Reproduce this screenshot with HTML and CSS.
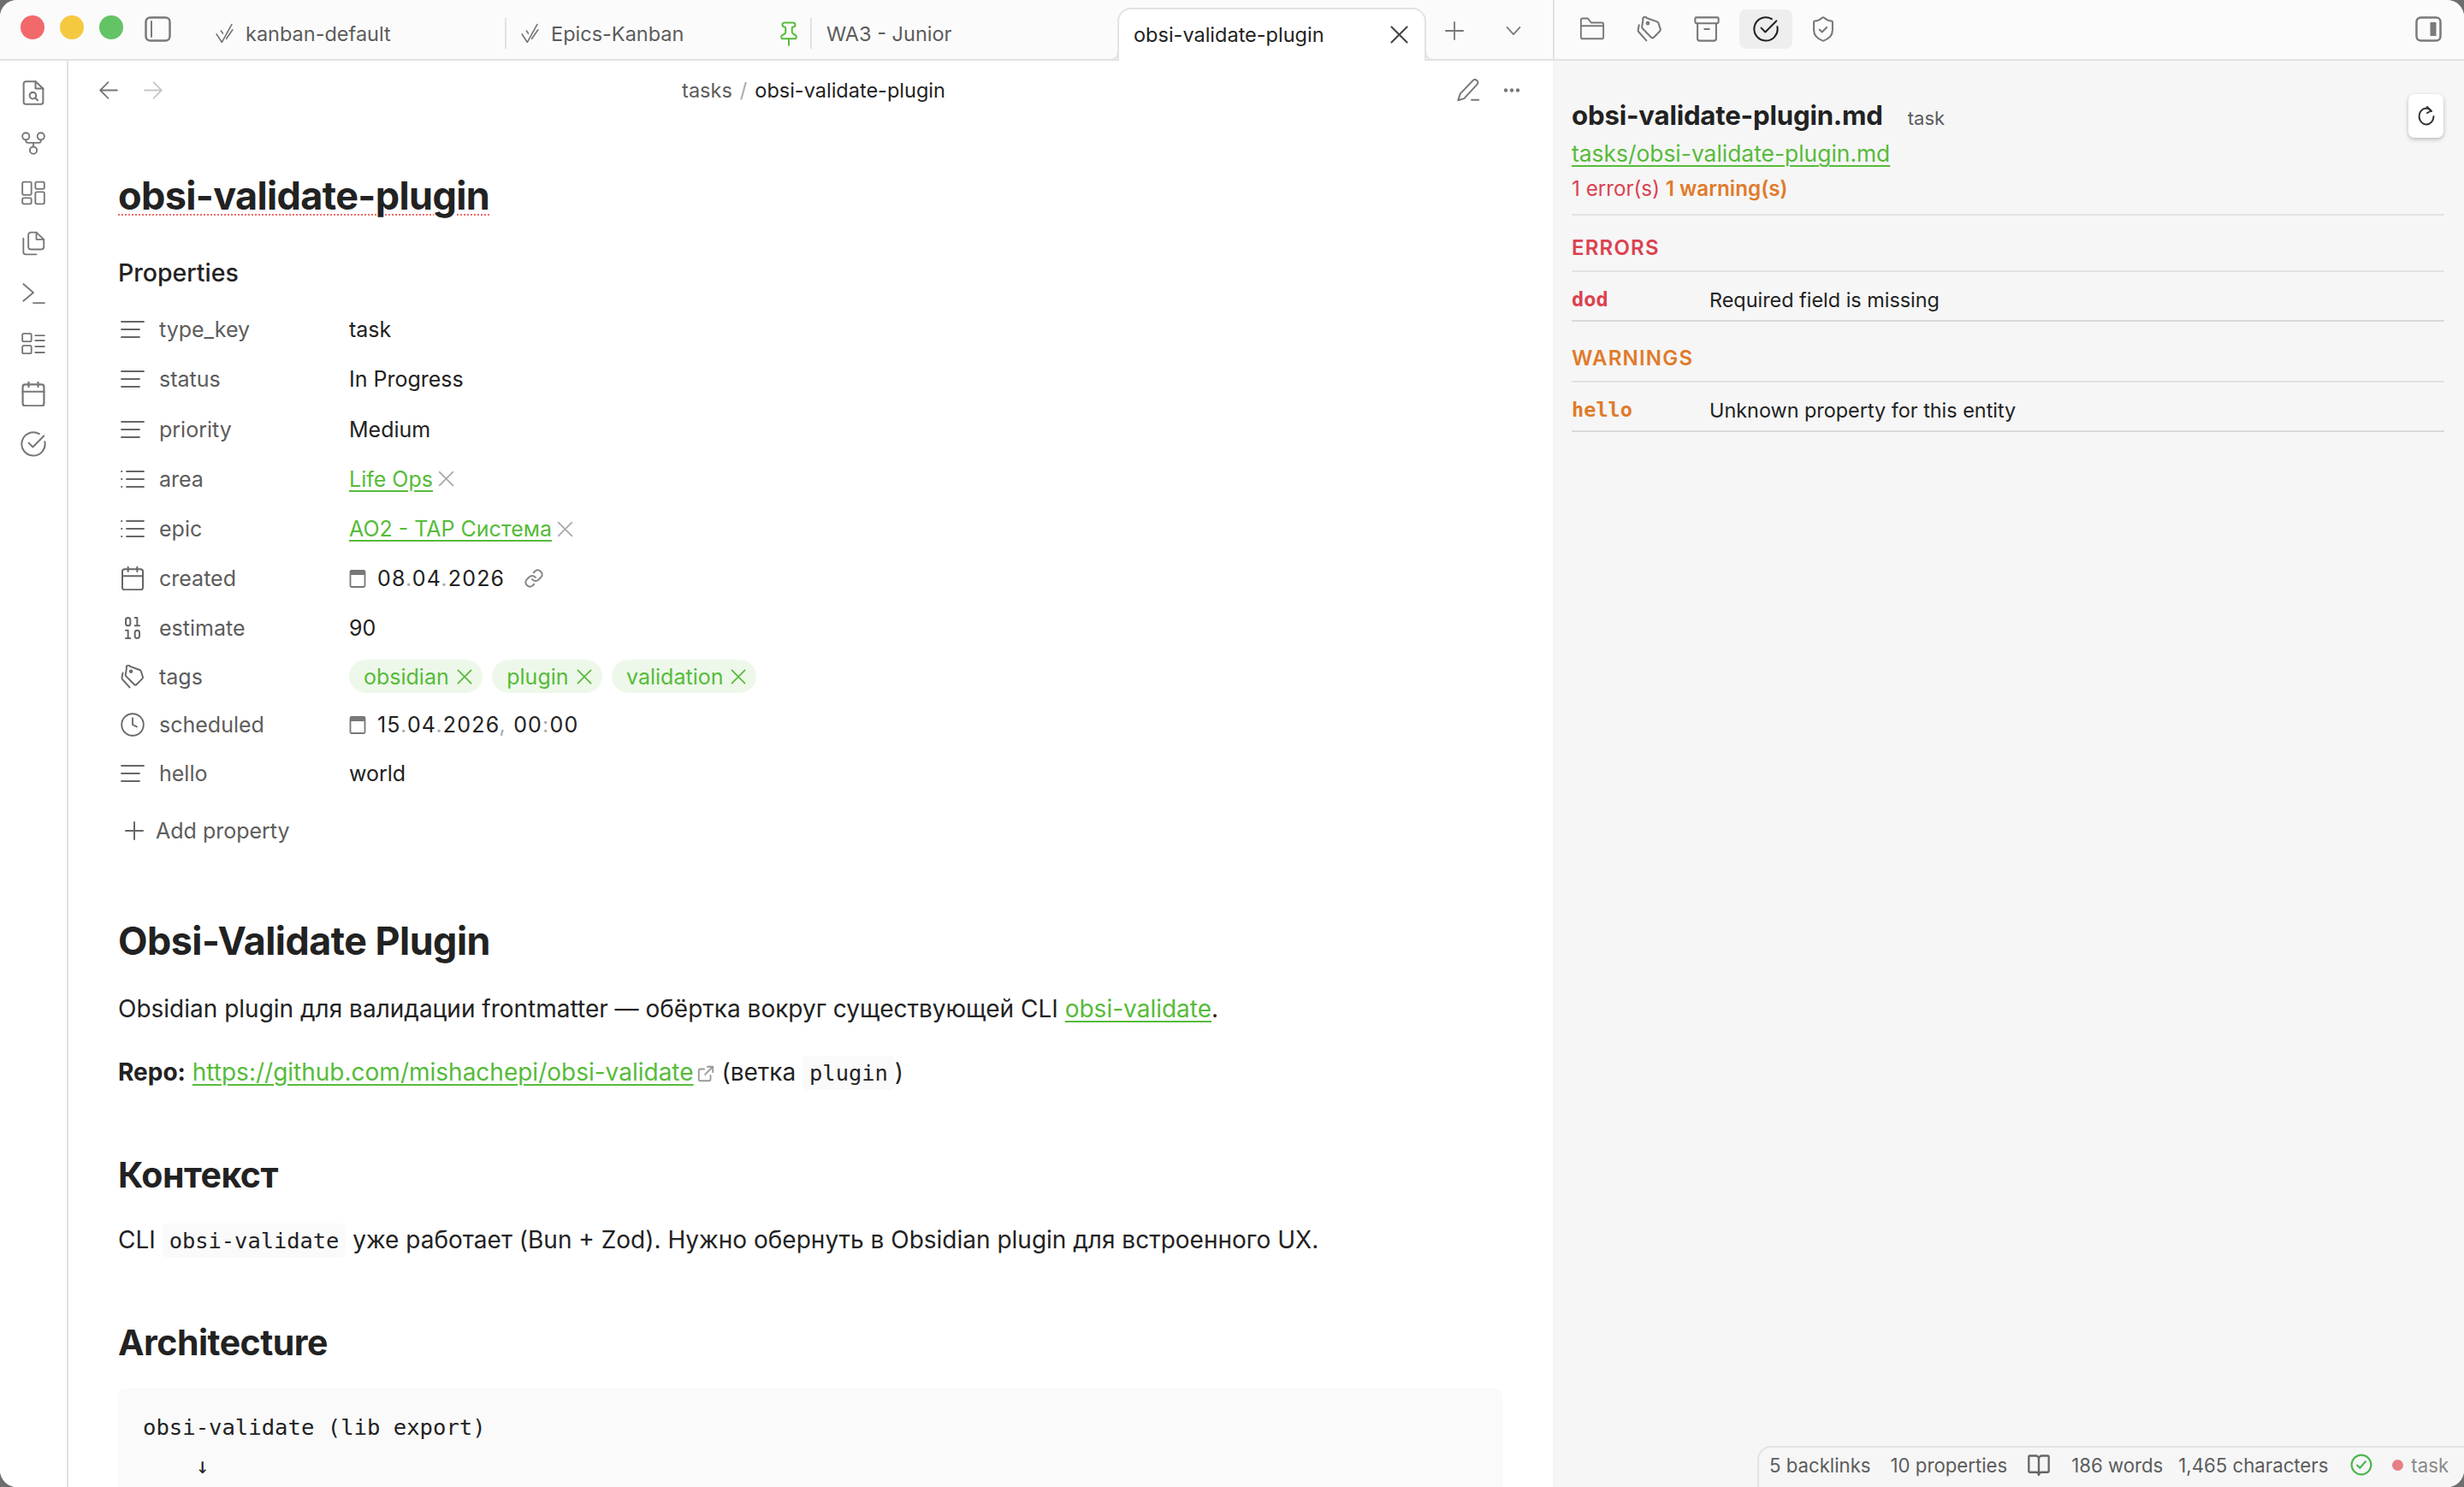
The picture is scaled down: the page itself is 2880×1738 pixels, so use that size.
FILE: index.html
```html
<!DOCTYPE html>
<html lang="ru">
<head>
    <meta charset="UTF-8">
    <title>obsi-validate-plugin</title>
    <link rel="stylesheet" href="styles.css">
</head>
<body>

<svg class="sprite" xmlns="http://www.w3.org/2000/svg">
    <symbol id="i-text" viewBox="0 0 28 24"><path d="M1 3h26M1 12h21M1 21h21"/></symbol>
    <symbol id="i-list" viewBox="0 0 28 24"><path d="M7 3h20M7 12h20M7 21h20M1 3h.5M1 12h.5M1 21h.5"/></symbol>
    <symbol id="i-x" viewBox="0 0 24 24"><path d="M5 5l14 14M19 5L5 19"/></symbol>
    <symbol id="i-calendar" viewBox="2.5 1.5 19 21"><path d="M8 2v4M16 2v4M3 10h18"/><rect x="3" y="4" width="18" height="18" rx="2"/></symbol>
    <symbol id="i-circle-check" viewBox="1 1 22 22"><path d="M21.8 10A10 10 0 1 1 17 3.3"/><path d="M8 11l3.5 3.5L21 5"/></symbol>
    <symbol id="i-tags" viewBox="1 1 22 22"><path d="M9.5 2.5l9 3.2a2 2 0 0 1 1.2 1.2l1.6 5a2 2 0 0 1-.5 2l-5.2 5.2a1.5 1.5 0 0 1-2.1 0L6 11.5a2 2 0 0 1-.5-1.4l1-6.2a1.6 1.6 0 0 1 3-1.4z"/><path d="M3 8.5l-.8 4.2a2 2 0 0 0 .5 1.7l6.6 7.4"/><circle cx="10.5" cy="7" r="1"/></symbol>
    <symbol id="i-check2" viewBox="0 0 24 24"><path d="M3 13l6 9L20 2"/><path d="M8 9l2 3"/><path d="M14 18l7-10"/></symbol>
    <symbol id="i-date" viewBox="0 0 20 22"><path class="fill" d="M1 2h18v5H1z"/><rect x="1.500" y="2" width="17" height="19" rx="1.500"/></symbol>
</svg>

<div class="window">

    <!-- Top bar -->
    <div class="topbar">
        <div class="topbar-left">
            <span class="light red"></span>
            <span class="light yellow"></span>
            <span class="light green"></span>
            <svg class="toggle-left" viewBox="0 0 31 30"><rect x="1.5" y="1.5" width="28" height="27" rx="5"/><path class="thin" d="M8 6v18"/></svg>

            <div class="tab tab-first">
                <svg class="tab-icon"><use href="#i-check2"/></svg>
                <span>kanban-default</span>
            </div>
            <div class="tab">
                <svg class="tab-icon"><use href="#i-check2"/></svg>
                <span>Epics-Kanban</span>
                <svg class="tab-pin" viewBox="0 0 24 24"><path d="M12 17v6"/><path d="M9 10.8a2 2 0 0 1-1.1 1.8l-1.8.9A2 2 0 0 0 5 15.2v.8a1 1 0 0 0 1 1h12a1 1 0 0 0 1-1v-.8a2 2 0 0 0-1.1-1.8l-1.8-.9a2 2 0 0 1-1.1-1.8V7a1 1 0 0 1 1-1 2 2 0 0 0 0-4H8a2 2 0 0 0 0 4 1 1 0 0 1 1 1z"/></svg>
            </div>
            <div class="tab tab-plain">
                <span>WA3 - Junior</span>
            </div>
            <div class="tab-active">
                <span>obsi-validate-plugin</span>
                <svg class="tab-close"><use href="#i-x"/></svg>
            </div>
            <svg class="tab-plus" viewBox="0 0 24 24"><path d="M12 1v22M1 12h22"/></svg>
            <svg class="tab-more" viewBox="0 0 24 24"><path d="M3 7l9 10 9-10"/></svg>
        </div>

        <div class="topbar-right">
            <svg class="side-icon" viewBox="0 0 24 24"><path d="M3 21a1.5 1.5 0 0 1-1.5-1.5v-16A1.5 1.5 0 0 1 3 2h5l3 4h10a1.5 1.5 0 0 1 1.5 1.5v12A1.5 1.5 0 0 1 21 21z"/><path d="M1.5 9h21"/></svg>
            <svg class="side-icon"><use href="#i-tags"/></svg>
            <svg class="side-icon" viewBox="1 1 22 22"><rect x="2" y="2" width="20" height="5" rx="1"/><path d="M4 7v13a2 2 0 0 0 2 2h12a2 2 0 0 0 2-2V7M10 12h4"/></svg>
            <span class="side-icon-on"><svg class="side-icon dark"><use href="#i-circle-check"/></svg></span>
            <svg class="side-icon" viewBox="3 1 18 22"><path d="M20 13c0 5-3.5 7.5-7.7 9a1 1 0 0 1-.6 0C7.5 20.500 4 18 4 13V6a1 1 0 0 1 1-1c2 0 4.500-1.200 6.200-2.700a1.200 1.200 0 0 1 1.600 0C14.500 3.800 17 5 19 5a1 1 0 0 1 1 1z"/><path d="M9 12.500l2 2 4-4"/></svg>
            <svg class="toggle-right" viewBox="0 0 31 30"><rect x="1.500" y="1.500" width="28" height="27" rx="5"/><path class="thick" d="M21 7v16"/></svg>
        </div>
    </div>

    <div class="workspace">

        <!-- Ribbon -->
        <div class="ribbon">
            <svg class="rib-icon" viewBox="1.500 .5 21 23"><path d="M14 1.500H5a2 2 0 0 0-2 2v17a2 2 0 0 0 2 2h14a2 2 0 0 0 2-2V8z"/><path d="M14 1.500V8h7"/><circle cx="11.500" cy="14.500" r="3"/><path d="M14 17l2 2"/></svg>
            <svg class="rib-icon" viewBox="0 0 24 24"><circle cx="4.500" cy="5" r="3.500"/><circle cx="19.500" cy="5" r="3.500"/><circle cx="12" cy="19" r="3.500"/><path d="M4.500 8.500v1a2 2 0 0 0 2 2h11a2 2 0 0 0 2-2v-1M12 11.500v4"/></svg>
            <svg class="rib-icon" viewBox="0 0 24 24"><rect x="1" y="1" width="9" height="13" rx="1.500"/><rect x="14" y="1" width="9" height="7" rx="1.500"/><rect x="14" y="11" width="9" height="12" rx="1.500"/><rect x="1" y="17" width="9" height="6" rx="1.500"/></svg>
            <svg class="rib-icon" viewBox="0 0 24 24"><path d="M15 1H9.500A2.500 2.500 0 0 0 7 3.500v12A2.500 2.500 0 0 0 9.500 18H20a2.500 2.500 0 0 0 2.500-2.500V8z"/><path d="M15 1v7h7.500"/><path d="M2 7v13.500A2.500 2.500 0 0 0 4.500 23H15"/></svg>
            <svg class="rib-icon" viewBox="0 0 24 24"><path d="M2 3l10 8.500L2 20M12 22h11"/></svg>
            <svg class="rib-icon" viewBox="0 0 24 24"><rect x="1" y="2" width="9" height="8" rx="1.500"/><rect x="1" y="14" width="9" height="8" rx="1.500"/><path d="M14 4h9M14 9h9M14 15h9M14 21h9"/></svg>
            <svg class="rib-icon"><use href="#i-calendar"/></svg>
            <svg class="rib-icon big"><use href="#i-circle-check"/></svg>
        </div>

        <!-- Note -->
        <div class="main">
            <div class="nav">
                <div class="nav-arrows">
                    <svg class="nav-icon" viewBox="0 0 24 24"><path d="M22 12H3M12 3l-9 9 9 9"/></svg>
                    <svg class="nav-icon off" viewBox="0 0 24 24"><path d="M2 12h19M12 3l9 9-9 9"/></svg>
                </div>
                <div class="crumbs"><span class="crumb-dir">tasks</span><span class="crumb-sep">/</span><span>obsi-validate-plugin</span></div>
                <div class="nav-actions">
                    <svg class="nav-icon" viewBox="0 0 24 24"><path d="M20.500 2.500a2.400 2.400 0 0 0-3.500 0L4 16l-2 6.500 6-1.800L21 6.500a2.500 2.500 0 0 0-.5-4z"/><path d="M15.500 22h7"/></svg>
                    <svg class="nav-dots" viewBox="0 0 24 8"><circle cx="4" cy="4" r="2.500"/><circle cx="12" cy="4" r="2.500"/><circle cx="20" cy="4" r="2.500"/></svg>
                </div>
            </div>

            <div class="content">
                <div class="inline-title">obsi-validate-plugin</div>
                <div class="props-heading">Properties</div>

                <div class="prop">
                    <svg class="prop-icon"><use href="#i-text"/></svg>
                    <span class="prop-key">type_key</span>
                    <span class="prop-val">task</span>
                </div>
                <div class="prop">
                    <svg class="prop-icon"><use href="#i-text"/></svg>
                    <span class="prop-key">status</span>
                    <span class="prop-val">In Progress</span>
                </div>
                <div class="prop">
                    <svg class="prop-icon"><use href="#i-text"/></svg>
                    <span class="prop-key">priority</span>
                    <span class="prop-val">Medium</span>
                </div>
                <div class="prop">
                    <svg class="prop-icon"><use href="#i-list"/></svg>
                    <span class="prop-key">area</span>
                    <span class="prop-val"><a class="link">Life Ops</a><svg class="link-x"><use href="#i-x"/></svg></span>
                </div>
                <div class="prop">
                    <svg class="prop-icon"><use href="#i-list"/></svg>
                    <span class="prop-key">epic</span>
                    <span class="prop-val"><a class="link">AO2 - TAP Система</a><svg class="link-x"><use href="#i-x"/></svg></span>
                </div>
                <div class="prop">
                    <svg class="prop-icon thin-icon"><use href="#i-calendar"/></svg>
                    <span class="prop-key">created</span>
                    <span class="prop-val date">
                        <svg class="date-icon"><use href="#i-date"/></svg>
                        <span>08<i>.</i>04<i>.</i>2026</span>
                        <svg class="date-link" viewBox="0 0 24 24"><path d="M10 13a5 5 0 0 0 7.500.5l3-3a5 5 0 0 0-7-7l-1.700 1.700"/><path d="M14 11a5 5 0 0 0-7.500-.5l-3 3a5 5 0 0 0 7 7l1.700-1.700"/></svg>
                    </span>
                </div>
                <div class="prop prop-short">
                    <svg class="prop-icon thin-icon" viewBox="3 1.500 18 21"><rect x="14" y="14" width="4" height="7" rx="2"/><rect x="6" y="3" width="4" height="7" rx="2"/><path d="M6 21h4M14 10h4M6 14h2v7M14 3h2v7"/></svg>
                    <span class="prop-key">estimate</span>
                    <span class="prop-val">90</span>
                </div>
                <div class="prop prop-short">
                    <svg class="prop-icon thin-icon"><use href="#i-tags"/></svg>
                    <span class="prop-key">tags</span>
                    <span class="prop-val pills">
                        <span class="pill">obsidian<svg class="pill-x"><use href="#i-x"/></svg></span>
                        <span class="pill">plugin<svg class="pill-x"><use href="#i-x"/></svg></span>
                        <span class="pill">validation<svg class="pill-x"><use href="#i-x"/></svg></span>
                    </span>
                </div>
                <div class="prop prop-short">
                    <svg class="prop-icon thin-icon" viewBox="0.500 0.500 23 23"><circle cx="12" cy="12" r="10.500"/><path d="M12 5.500V12l4 2"/></svg>
                    <span class="prop-key">scheduled</span>
                    <span class="prop-val date">
                        <svg class="date-icon"><use href="#i-date"/></svg>
                        <span>15<i>.</i>04<i>.</i>2026<i>,</i> 00<i>:</i>00</span>
                    </span>
                </div>
                <div class="prop prop-short">
                    <svg class="prop-icon"><use href="#i-text"/></svg>
                    <span class="prop-key">hello</span>
                    <span class="prop-val">world</span>
                </div>

                <div class="add-prop">
                    <svg class="add-icon" viewBox="0 0 24 24"><path d="M12 2v20M2 12h20"/></svg>
                    <span>Add property</span>
                </div>

                <h2 class="h-first">Obsi-Validate Plugin</h2>
                <p>Obsidian plugin для валидации frontmatter — обёртка вокруг существующей CLI <a class="link">obsi-validate</a>.</p>
                <p class="repo"><strong>Repo:</strong> <a class="link">https://github.com/mishachepi/obsi-validate</a><svg class="ext" viewBox="0 0 24 24"><path d="M14 3h7v7M21 3l-10 10M18 14v5a2 2 0 0 1-2 2H5a2 2 0 0 1-2-2V8a2 2 0 0 1 2-2h5"/></svg> (ветка <code>plugin</code>)</p>

                <h2 class="h-ctx">Контекст</h2>
                <p>CLI <code>obsi-validate</code> уже работает (Bun + Zod). Нужно обернуть в Obsidian plugin для встроенного UX.</p>

                <h2 class="h-arch">Architecture</h2>
                <pre class="code">obsi-validate (lib export)
    ↓</pre>
            </div>
        </div>

        <!-- Validation panel -->
        <div class="side">
            <button class="refresh"><svg class="refresh-icon" viewBox="0 0 24 24"><path d="M20.500 12a8.500 9.500 0 1 1-9-9.500c1.500 0 3 .5 4 1.200L18 6"/><path d="M13 1l4.500 4.500L13 8"/></svg></button>
            <div class="side-head">
                <span class="side-file">obsi-validate-plugin.md</span>
                <span class="side-type">task</span>
            </div>
            <a class="link side-path">tasks/obsi-validate-plugin.md</a>
            <div class="side-counts"><span class="err">1 error(s)</span> <strong class="warn">1 warning(s)</strong></div>

            <div class="group-title err">ERRORS</div>
            <div class="issue"><span class="issue-key err">dod</span><span>Required field is missing</span></div>

            <div class="group-title warn warn-title">WARNINGS</div>
            <div class="issue"><span class="issue-key warn">hello</span><span>Unknown property for this entity</span></div>

            <div class="status">
                <span class="st-a">5 backlinks</span>
                <span class="st-b">10 properties</span>
                <svg class="st-book" viewBox="0 0 24 24"><path d="M12 6v16"/><path d="M12 6a3 3 0 0 0-3-3H3a1 1 0 0 0-1 1v14.500a1 1 0 0 0 1 1h6.500a2.500 2.500 0 0 1 2.500 2.500 2.500 2.500 0 0 1 2.500-2.500H21a1 1 0 0 0 1-1V4a1 1 0 0 0-1-1h-6a3 3 0 0 0-3 3z"/></svg>
                <span class="st-c">186 words</span>
                <span class="st-d">1,465 characters</span>
                <svg class="st-ok" viewBox="0 0 24 24"><circle cx="12" cy="12" r="10.500"/><path d="M7.500 12.500l3 3 6-7"/></svg>
                <span class="st-dot"></span>
                <span class="st-task">task</span>
            </div>
        </div>
    </div>
</div>

</body>
</html>
```

FILE: styles.css
```css
* { box-sizing: border-box; }
html, body { margin: 0; height: 100%; }
body { background: #6e6e6e; font-family: Inter, "Noto Sans", sans-serif; color: #222; overflow: hidden; }
svg { fill: none; stroke: currentColor; stroke-width: 2; stroke-linecap: round; stroke-linejoin: round; flex: none; }
.sprite { display: none; }
.link { color: #56bb3a; text-decoration: underline; text-underline-offset: 4px; text-decoration-thickness: 2px; }

.window { height: 1738px; background: #fff; border-radius: 20px; overflow: hidden; display: flex; flex-direction: column; }

/* top bar */
.topbar { height: 71px; display: flex; background: #fbfbfb; border-bottom: 2px solid #e2e2e2; flex: none; }
.topbar-left { width: 1815px; display: flex; align-items: flex-start; padding-left: 24px; position: relative; }
.light { width: 28px; height: 28px; border-radius: 50%; margin: 18px 18px 0 0; flex: none; }
.red { background: #f2696b; }
.yellow { background: #f5c93f; }
.green { background: #62c465; }
.toggle-left { width: 31px; height: 30px; margin: 19px 0 0 7px; color: #7a7a7a; stroke-width: 2.5; }
.toggle-left .thin { stroke-width: 2; }
.tab { width: 357px; height: 36px; margin-top: 21px; display: flex; align-items: center; padding-left: 15px; border-right: 2px solid #e2e2e2; font-size: 23.5px; color: #5c5c5c; }
.tab-first { margin-left: 35px; }
.tab-plain { border-right: none; padding-left: 17px; }
.tab-icon { width: 25px; height: 30px; margin-right: 12px; color: #777; stroke-width: 1.6; }
.tab-pin { width: 30px; height: 30px; margin-left: auto; margin-right: 10px; color: #56bb3a; stroke-width: 1.6; }
.tab-active { width: 361px; height: 62px; margin-top: 9px; position: relative; z-index: 1; display: flex; align-items: center; padding: 0 0 2px 17px; background: #fff; border: 2px solid #e2e2e2; border-bottom: none; border-radius: 16px 16px 0 0; font-size: 23.5px; color: #222; }
.tab-active::before, .tab-active::after { content: ""; position: absolute; bottom: 0; width: 10px; height: 10px; border-bottom: 2px solid #e2e2e2; }
.tab-active::before { left: -12px; border-right: 2px solid #e2e2e2; border-bottom-right-radius: 10px; }
.tab-active::after { right: -12px; border-left: 2px solid #e2e2e2; border-bottom-left-radius: 10px; }
.tab-close { width: 31px; height: 31px; margin-left: auto; margin-right: 14px; color: #444; stroke-width: 1.600; }
.tab-plus { width: 22px; height: 22px; margin: 25px 0 0 22px; color: #777; stroke-width: 2; }
.tab-more { width: 20px; height: 20px; margin: 26px 0 0 48px; color: #777; }
.topbar-right { flex: 1; border-left: 2px solid #e2e2e2; display: flex; align-items: flex-start; padding-left: 29px; }
.side-icon { width: 30px; height: 30px; margin: 19px 37px 0 0; color: #777; stroke-width: 1.5; }
.side-icon-on { width: 62px; height: 46px; margin: 11px 21px 0 -14px; display: flex; align-items: center; justify-content: center; background: #eee; border-radius: 8px; }
.side-icon.dark { margin: 0; color: #222; }
.toggle-right { width: 31px; height: 30px; margin: 19px 26px 0 auto; color: #7a7a7a; stroke-width: 2.5; }
.toggle-right .thick { stroke-width: 7; stroke-linecap: butt; }

.workspace { flex: 1; display: flex; min-height: 0; }

/* ribbon */
.ribbon { width: 80px; flex: none; border-right: 2px solid #e2e2e2; display: flex; flex-direction: column; align-items: center; padding-top: 23px; gap: 29.600px; background: #fff; }
.rib-icon { width: 28px; height: 29px; color: #777; stroke-width: 1.6; }
.rib-icon.big { width: 30px; height: 30px; stroke-width: 1.5; }

/* note */
.main { width: 1735px; flex: none; overflow: hidden; }
.nav { height: 68px; display: grid; grid-template-columns: 1fr auto 1fr; align-items: center; padding: 0 37px 0 34px; }
.nav-arrows { display: flex; gap: 28px; }
.nav-icon { width: 25px; height: 25px; color: #777; stroke-width: 1.7; }
.nav-icon.off { color: #c8c8c8; }
.crumbs { font-size: 23.5px; display: flex; gap: 9px; margin-left: 10px; }
.crumb-dir { color: #5c5c5c; }
.crumb-sep { color: #aaa; }
.nav-actions { display: flex; justify-content: flex-end; align-items: center; gap: 26px; }
.nav-actions .nav-icon { width: 28px; height: 28px; }
.nav-dots { width: 22px; height: 7px; fill: #777; stroke: none; }

.content { padding: 0 59px 0 58px; }
.inline-title { font-size: 45px; font-weight: 700; line-height: 60px; margin-top: 60px; letter-spacing: -0.65px; text-decoration: underline dotted #f26a6a 2px; text-underline-offset: 5px; }
.props-heading { font-size: 28.500px; font-weight: 500; line-height: 40px; margin: 40px 0 17px; }
.prop { height: 58.250px; display: flex; align-items: center; font-size: 25px; }
.prop-short { height: 56.800px; }
.prop-icon { width: 28px; height: 28px; margin-left: 3px; color: #666; stroke-width: 1.800; }
.prop-icon.thin-icon { stroke-width: 1.500; }
.prop-key { width: 239px; padding-left: 17px; color: #5c5c5c; }
.prop-val { display: flex; align-items: center; color: #222; }
.link-x { width: 27px; height: 27px; margin-left: 2px; color: #aaa; stroke-width: 1.600; }
.date-icon { width: 20px; height: 22px; margin-right: 13px; color: #777; stroke-width: 1.800; }
.date-icon .fill, #i-date .fill { fill: #777; stroke: none; }
.date i { font-style: normal; color: #aaa; }
.date span { letter-spacing: 1.200px; }
.date-link { width: 24px; height: 24px; margin-left: 22px; color: #888; }
.pills { gap: 11.500px; }
.pill { height: 39px; display: flex; align-items: center; padding: 0 8px 0 17px; background: #eef8ea; border-radius: 20px; color: #56bb3a; }
.pill-x { width: 26px; height: 26px; margin-left: 5px; stroke-width: 1.600; }
.add-prop { display: flex; align-items: center; height: 40px; margin-top: 18px; font-size: 25px; color: #5c5c5c; }
.add-icon { width: 24px; height: 24px; margin: 0 13px 0 7px; color: #666; }

h2 { font-size: 44.800px; font-weight: 700; letter-spacing: -0.5px; margin: 0; line-height: 56px; color: #222; }
.h-first { margin-top: 81px; }
.h-ctx { font-size: 41px; margin-top: 72px; line-height: 50px; }
.h-arch { font-size: 41px; margin-top: 72px; line-height: 50px; }
p { font-size: 28px; line-height: 44px; margin: 29px 0 0; color: #222; }
.repo { margin-top: 30px; }
.ext { width: 22px; height: 22px; margin-left: 3px; color: #999; vertical-align: -3px; }
code { font-family: "DejaVu Sans Mono", monospace; font-size: 25.400px; background: #fafafa; border-radius: 6px; padding: 5px 8px; }
.code { margin: 29px 0 0; background: #fafafa; border-radius: 8px; padding: 23px 29px; height: 400px; font-family: "DejaVu Sans Mono", monospace; font-size: 25.600px; line-height: 45px; color: #222; }

/* validation panel */
.side { flex: 1; min-width: 0; position: relative; background: #f6f6f6; padding: 40px 23px 0 22px; }
.refresh { position: absolute; top: 39px; right: 24px; width: 41px; height: 51px; padding: 0; border: none; background: #fff; border-radius: 7px; box-shadow: 0 2px 5px rgba(0, 0, 0, 0.25); display: flex; align-items: center; justify-content: center; }
.refresh-icon { width: 24px; height: 24px; color: #333; }
.side-head { display: flex; align-items: baseline; height: 48px; line-height: 48px; }
.side-file { font-size: 31.200px; font-weight: 700; letter-spacing: -0.2px; }
.side-type { font-size: 22px; color: #5c5c5c; margin-left: 29px; }
.side-path { display: block; font-size: 26.400px; line-height: 40px; }
.side-counts { font-size: 24.200px; line-height: 34px; margin-top: 5px; padding-bottom: 12px; border-bottom: 2px solid #e2e2e2; }
.err { color: #dc4150; }
.warn { color: #e07b2b; font-weight: 700; }
.side-counts .warn { font-weight: 600; }
.group-title { font-size: 24px; font-weight: 600; letter-spacing: 1.200px; line-height: 34px; margin-top: 21px; padding-bottom: 9px; border-bottom: 2px solid #e2e2e2; }
.warn-title { margin-top: 26px; padding-bottom: 9px; }
.issue { display: flex; align-items: center; height: 58px; padding-top: 8px; font-size: 23.400px; border-bottom: 2px solid #d9d9d9; }
.issue-key { width: 161px; font-family: "DejaVu Sans Mono", monospace; font-weight: 700; font-size: 23.600px; }
.status { position: absolute; right: 0; bottom: 0; height: 48px; width: 826px; padding-bottom: 6px; display: flex; align-items: center; font-size: 22.200px; color: #5c5c5c; background: #f6f6f6; border: 2px solid #e2e2e2; border-right: none; border-bottom: none; border-top-left-radius: 16px; white-space: nowrap; }
.st-a { margin-left: 12px; }
.st-b { margin-left: 23px; }
.st-book { width: 28px; height: 28px; margin-left: 23px; color: #666; }
.st-c { margin-left: 24px; }
.st-d { margin-left: 18px; }
.st-ok { width: 26px; height: 26px; margin-left: 26px; color: #4cb74f; }
.st-dot { width: 13px; height: 13px; margin-left: 23px; border-radius: 50%; background: #e47f86; }
.st-task { margin-left: 9px; color: #8a8a8a; }
```
